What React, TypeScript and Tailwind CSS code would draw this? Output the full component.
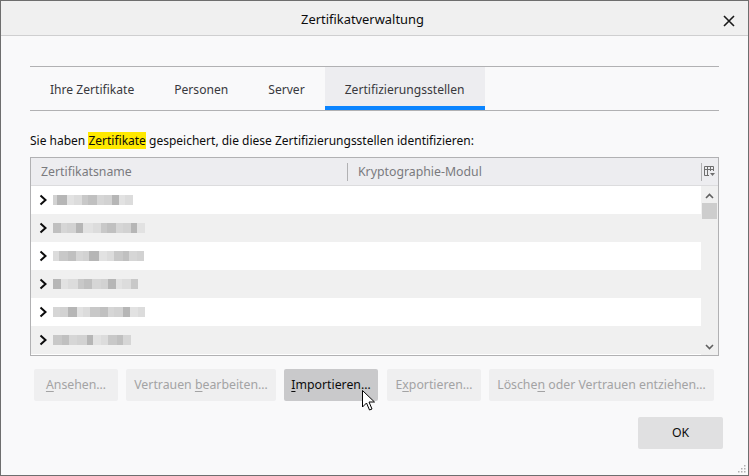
import React from "react";

const font = { fontFamily: '"Noto Sans", "Open Sans", sans-serif' };

const rows = [
  [4, 10, 7, 8, 6, 9, 7, 8, 7, 6, 8],
  [8, 6, 9, 7, 10, 8, 6, 9, 7, 8, 6, 8],
  [6, 9, 8, 7, 6, 10, 8, 7, 9, 6, 8, 7],
  [8, 7, 10, 6, 8, 9, 7, 8, 6, 9, 7],
  [7, 8, 9, 6, 7, 10, 8, 6, 9, 7, 8, 7],
  [9, 7, 8, 10, 6, 8, 7, 9, 6, 8],
];
const shades = ["#d2d2d2", "#c0c0c0", "#dcdcdc", "#b6b6b6", "#d6d6d6", "#c8c8c8", "#e2e2e2"];

function Blur({ seed, cells }: { seed: number; cells: number[] }) {
  return (
    <div className="flex h-[10px] items-stretch">
      {cells.map((w, i) => (
        <span key={i} style={{ width: w, background: shades[(i * 3 + seed) % shades.length] }} />
      ))}
    </div>
  );
}

function Chevron() {
  return (
    <svg width="10" height="12" viewBox="0 0 10 12" className="shrink-0">
      <path d="M2.5 1.5 L7.5 6 L2.5 10.5" fill="none" stroke="#0c0c0d" strokeWidth="2" />
    </svg>
  );
}

function U({ children }: { children: React.ReactNode }) {
  return <span className="underline decoration-1 underline-offset-2">{children}</span>;
}

function Btn({ children, hover, w }: { children: React.ReactNode; hover?: boolean; w: string }) {
  return (
    <div
      className={
        "flex h-[32px] items-center justify-center whitespace-nowrap rounded-[2px] pt-[1px] text-[12.3px] " +
        w +
        (hover ? " bg-[#c9c9cb] text-[#0c0c0d]" : " bg-[#efeff0] text-[#a3a3a4]")
      }
    >
      <span>{children}</span>
    </div>
  );
}

export default function App() {
  const tabs = ["Ihre Zertifikate", "Personen", "Server", "Zertifizierungsstellen"];
  return (
    <div
      className="relative flex h-[476px] w-[749px] flex-col border border-[#6e6e6e] bg-[#f9f9fa] text-[#0c0c0d]"
      style={font}
    >
      <div className="relative flex h-[35px] shrink-0 items-center justify-center border-b border-[#cfcfd0] bg-[#f0f0f0] text-[12.9px]">
        <span className="-ml-[24px] mt-[4px]">Zertifikatverwaltung</span>
        <svg className="absolute right-[13px] top-[14px]" width="12" height="12" viewBox="0 0 12 12">
          <path d="M1 1 L11 11 M11 1 L1 11" stroke="#1a1a1a" strokeWidth="1.6" />
        </svg>
      </div>

      <div className="flex flex-1 flex-col px-[29px]">
        <div className="mt-[30px] flex h-[45px] border-y border-[#b1b1b3] text-[12.1px] text-[#38383d]">
          {tabs.map((t, i) => (
            <div
              key={t}
              className={
                "flex items-center px-[20px] " +
                (i === 3 ? "border-b-[4px] border-[#0a84ff] bg-[#ededf0] pt-[7px]" : "pt-[3px]")
              }
            >
              {t}
            </div>
          ))}
        </div>

        <p className="mt-[21px] text-[12px] leading-[18px]">
          Sie haben <span className="bg-[#ffe900]">Zertifikate</span> gespeichert, die diese
          Zertifizierungsstellen identifizieren:
        </p>

        <div className="mt-[7px] flex h-[199px] flex-col border border-[#b1b1b3] bg-white">
          <div className="flex h-[28px] shrink-0 items-center border-b border-[#dcdcde] bg-[#ededf0] text-[12.3px] text-[#7a7a7e]">
            <div className="w-[316px] pl-[10px] pt-[2px]">Zertifikatsname</div>
            <div className="h-[18px] border-l border-[#b1b1b3]" />
            <div className="flex-1 pl-[10px] pt-[2px]">Kryptographie-Modul</div>
            <div className="flex h-[18px] items-center border-l border-[#b1b1b3] pl-[2px] pr-[3px]">
              <svg width="11" height="11" viewBox="0 0 11 11">
                <path d="M0.5 0.5 H9.5 V5 M0.5 0.5 V9.5 H5 M0.5 3.5 H9.5 M3.5 0.5 V9.5 M6.5 0.5 V5" fill="none" stroke="#6e6e6e" strokeWidth="1" />
                <path d="M6 7 H11 L8.5 10 Z" fill="#6e6e6e" />
              </svg>
            </div>
          </div>
          <div className="flex flex-1">
            <div className="flex flex-1 flex-col">
              {rows.map((r, i) => (
                <div
                  key={i}
                  className={"flex h-[28px] items-center gap-[5px] pl-[7px] " + (i % 2 ? "bg-[#f0f0f0]" : "bg-white")}
                >
                  <Chevron />
                  <Blur seed={i} cells={r} />
                </div>
              ))}
            </div>
            <div className="flex w-[17px] flex-col items-center bg-[#f0f0f0]">
              <svg className="mt-[7px]" width="9" height="6" viewBox="0 0 9 6">
                <path d="M1 5 L4.5 1.5 L8 5" fill="none" stroke="#606060" strokeWidth="1.6" />
              </svg>
              <div className="mt-[4px] h-[16px] w-[15px] bg-[#cdcdcd]" />
              <div className="flex-1" />
              <svg className="mb-[5px]" width="9" height="6" viewBox="0 0 9 6">
                <path d="M1 1 L4.5 4.5 L8 1" fill="none" stroke="#606060" strokeWidth="1.6" />
              </svg>
            </div>
          </div>
        </div>

        <div className="ml-[4px] mt-[13px] flex gap-[8px]">
          <Btn w="w-[84px]">
            <U>A</U>nsehen…
          </Btn>
          <Btn w="w-[150px]">
            Vertrauen <U>b</U>earbeiten…
          </Btn>
          <Btn w="w-[94px]" hover>
            <U>I</U>mportieren…
          </Btn>
          <Btn w="w-[94px] ml-[1px]">
            E<U>x</U>portieren…
          </Btn>
          <Btn w="w-[225px]">
            Lösche<U>n</U> oder Vertrauen entziehen…
          </Btn>
        </div>

        <div className="mr-[-4px] mt-[16px] flex justify-end">
          <div className="flex h-[32px] w-[85px] items-center justify-center rounded-[2px] bg-[#e0e0e1] pt-[1px] text-[12.3px]">
            OK
          </div>
        </div>
      </div>

      <svg className="absolute left-[361px] top-[389px]" width="14" height="22" viewBox="0 0 14 22">
        <path d="M0.5 0.5 V17 L4.5 13 L7.5 20 L10 19 L7 12 L12.5 12 Z" fill="#fff" stroke="#000" strokeWidth="1" />
      </svg>

      <svg className="absolute bottom-[2px] right-[2px]" width="8" height="8" viewBox="0 0 8 8">
        <g fill="#b0b0b0">
          <rect x="6" y="0" width="1.5" height="1.5" />
          <rect x="3" y="3" width="1.5" height="1.5" />
          <rect x="6" y="3" width="1.5" height="1.5" />
          <rect x="0" y="6" width="1.5" height="1.5" />
          <rect x="3" y="6" width="1.5" height="1.5" />
          <rect x="6" y="6" width="1.5" height="1.5" />
        </g>
      </svg>
    </div>
  );
}
